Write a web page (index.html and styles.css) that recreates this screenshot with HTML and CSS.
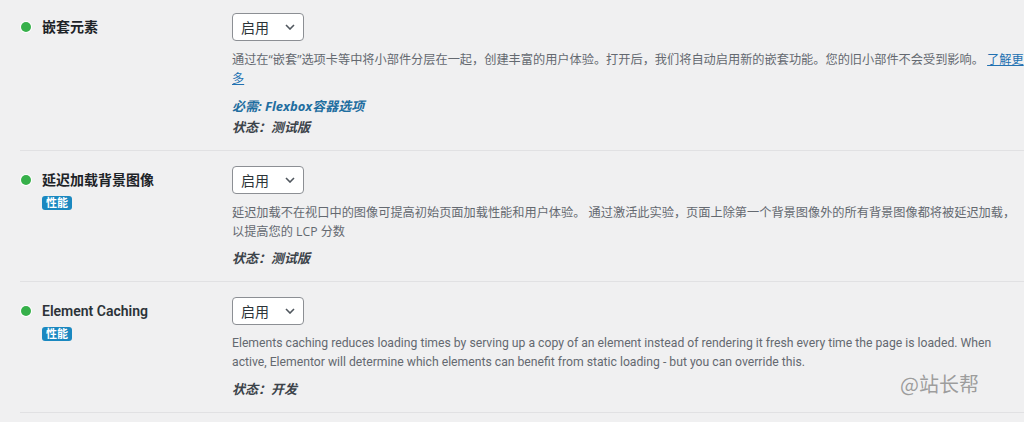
FILE: index.html
```html
<!DOCTYPE html>
<html lang="zh-CN">
<head>
  <meta charset="UTF-8">
  <meta name="viewport" content="width=device-width, initial-scale=1.0">
  <title>实验</title>
  <link rel="stylesheet" href="styles.css">
</head>
<body>
  <div class="experiments">

    <div class="row">
      <div class="row-head">
        <div class="name"><span class="dot"></span>嵌套元素</div>
      </div>
      <div class="row-body">
        <div class="select"><span>启用</span>
          <svg width="10" height="6" viewBox="0 0 10 6"><path d="M1 1l4 4 4-4" fill="none" stroke="#50575e" stroke-width="1.6"/></svg>
        </div>
        <p class="desc">通过在“嵌套”选项卡等中将小部件分层在一起，创建丰富的用户体验。打开后，我们将自动启用新的嵌套功能。您的旧小部件不会受到影响。 <a href="#">了解更多</a></p>
        <p class="required">必需: Flexbox容器选项</p>
        <p class="status">状态：测试版</p>
      </div>
    </div>

    <div class="row">
      <div class="row-head">
        <div class="name"><span class="dot"></span>延迟加载背景图像</div>
        <span class="tag">性能</span>
      </div>
      <div class="row-body">
        <div class="select"><span>启用</span>
          <svg width="10" height="6" viewBox="0 0 10 6"><path d="M1 1l4 4 4-4" fill="none" stroke="#50575e" stroke-width="1.6"/></svg>
        </div>
        <p class="desc">延迟加载不在视口中的图像可提高初始页面加载性能和用户体验。 通过激活此实验，页面上除第一个背景图像外的所有背景图像都将被延迟加载，以提高您的 LCP 分数</p>
        <p class="status">状态：测试版</p>
      </div>
    </div>

    <div class="row">
      <div class="row-head">
        <div class="name latin"><span class="dot"></span>Element Caching</div>
        <span class="tag">性能</span>
      </div>
      <div class="row-body">
        <div class="select"><span>启用</span>
          <svg width="10" height="6" viewBox="0 0 10 6"><path d="M1 1l4 4 4-4" fill="none" stroke="#50575e" stroke-width="1.6"/></svg>
        </div>
        <p class="desc latin">Elements caching reduces loading times by serving up a copy of an element instead of rendering it fresh every time the page is loaded. When active, Elementor will determine which elements can benefit from static loading - but you can override this.</p>
        <p class="status">状态：开发</p>
      </div>
    </div>

    <div class="watermark">@站长帮</div>
  </div>
</body>
</html>
```

FILE: styles.css
```css
body {
  margin: 0;
  background-color: #f0f0f1;
  font-family: "Open Sans", "Noto Sans CJK SC", sans-serif;
  color: #3c434a;
  overflow: hidden;
}
.experiments {
  position: relative;
  padding-left: 20px;
  margin-top: -2px;
}
.row {
  display: grid;
  grid-template-columns: 212px 1fr;
  border-bottom: 1px solid #e1e1e3;
}
.row-head {
  padding-top: 19px;
}
.name {
  display: flex;
  align-items: center;
  font-size: 14px;
  line-height: 20px;
  font-weight: bold;
  color: #1d2327;
}
.name.latin {
  font-family: Roboto, "Noto Sans CJK SC", sans-serif;
  font-weight: 600;
  color: #2c3338;
}
.dot {
  width: 10px;
  height: 10px;
  margin: 0 11px 0 1px;
  border-radius: 50%;
  background: #36b04a;
  box-shadow: 0 0 0 1px #fff;
}
.tag {
  display: inline-block;
  margin: 4px 0 0 22px;
  padding: 0 4px;
  height: 14px;
  line-height: 14px;
  font-size: 11px;
  font-weight: bold;
  color: #fff;
  background: #1a88c0;
  border-radius: 3px;
}
.row-body {
  padding: 15px 0 13px 0;
}
.select {
  display: flex;
  align-items: center;
  justify-content: space-between;
  box-sizing: border-box;
  width: 72px;
  height: 28px;
  padding: 0 8px 0 8px;
  background: #fff;
  border: 1px solid #8c8f94;
  border-radius: 4px;
  font-size: 14px;
  color: #2c3338;
}
.desc {
  margin: 9px 0 0;
  font-size: 12.2px;
  line-height: 19px;
  color: #646970;
}
.desc.latin {
  font-family: Roboto, sans-serif;
  font-size: 12.2px;
}
.desc a {
  color: #2271b1;
}
.required {
  margin: 9px 0 0;
  font-size: 13px;
  line-height: 19px;
  font-weight: bold;
  font-style: italic;
  color: #1f6ea0;
}
.status {
  margin: 8px 0 0;
  font-size: 13px;
  line-height: 19px;
  font-weight: bold;
  font-style: italic;
  color: #3c434a;
}
.required + .status {
  margin-top: 2px;
}
.watermark {
  position: absolute;
  left: 900px;
  top: 373px;
  font-size: 20px;
  line-height: 26px;
  color: rgba(120, 120, 120, 0.7);
  font-family: "Noto Sans CJK SC", sans-serif;
}
```
